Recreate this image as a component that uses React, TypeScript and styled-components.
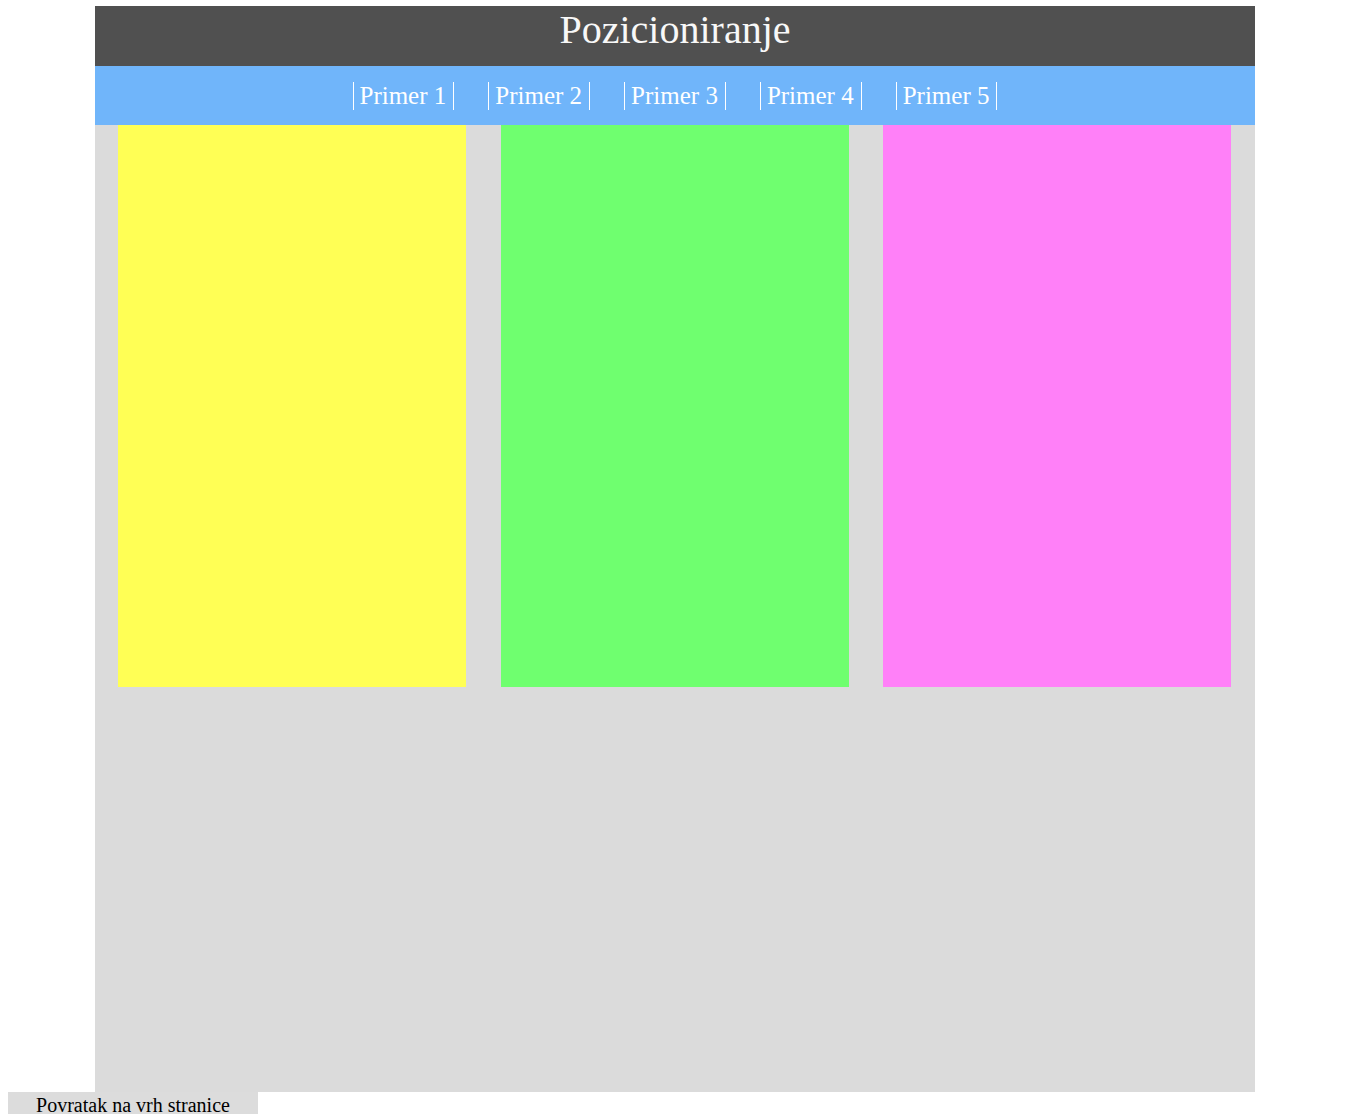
import { createGlobalStyle } from "styled-components";
import styled from "styled-components";

const GlobalStyle = createGlobalStyle`
    html, body
    {
        margin: 0;
        padding: 0;
        background: #ffffff;
    }

    body
    {
        font-family: "Liberation Serif", "Times New Roman", serif;
        padding: 0 8px;
    }
`;

const items = ["Primer 1", "Primer 2", "Primer 3", "Primer 4", "Primer 5"];
const boxes = ["#ffff55", "#6fff6f", "#ff80f8"];

export default function App()
{
    return (
        <>
            <GlobalStyle/>
            <Page id="vrh">
                <Header>Pozicioniranje</Header>

                <Nav>
                    {items.map(item => (
                        <NavLink key={item} href="#">{item}</NavLink>
                    ))}
                </Nav>

                <Content>
                    {boxes.map(color => (
                        <Box key={color} color={color}/>
                    ))}
                </Content>
            </Page>

            <BackToTop href="#vrh">Povratak na vrh stranice</BackToTop>
        </>
    );
}

const Page = styled.div`
    width: 1160px;
    margin: 6px 0 0 87px;
    background: #dbdbdb;
    height: 1086px;
    display: flex;
    flex-direction: column;
`;

const Header = styled.h1`
    margin: 0;
    height: 60px;
    background: #505050;
    color: #f8f8f8;
    font-size: 40px;
    font-weight: normal;
    text-align: center;
    line-height: 48px;
`;

const Nav = styled.nav`
    display: flex;
    justify-content: center;
    align-items: center;
    gap: 34px;
    height: 59px;
    background: #70b5fa;
`;

const NavLink = styled.a`
    display: block;
    padding: 0 7px 0 6px;
    border-left: 1px solid #ffffff;
    border-right: 1px solid #ffffff;
    color: #ffffff;
    font-size: 25px;
    line-height: 28px;
    text-decoration: none;
`;

const Content = styled.section`
    display: flex;
    justify-content: space-between;
    padding: 0 24px 0 23px;
`;

const Box = styled.div<{ color: string }>`
    width: 348px;
    height: 562px;
    background: ${props => props.color};
`;

const BackToTop = styled.a`
    display: block;
    width: 250px;
    padding: 2px 0 4px;
    background: #dcdcdc;
    color: #000000;
    font-size: 20px;
    text-align: center;
    text-decoration: none;
`;
